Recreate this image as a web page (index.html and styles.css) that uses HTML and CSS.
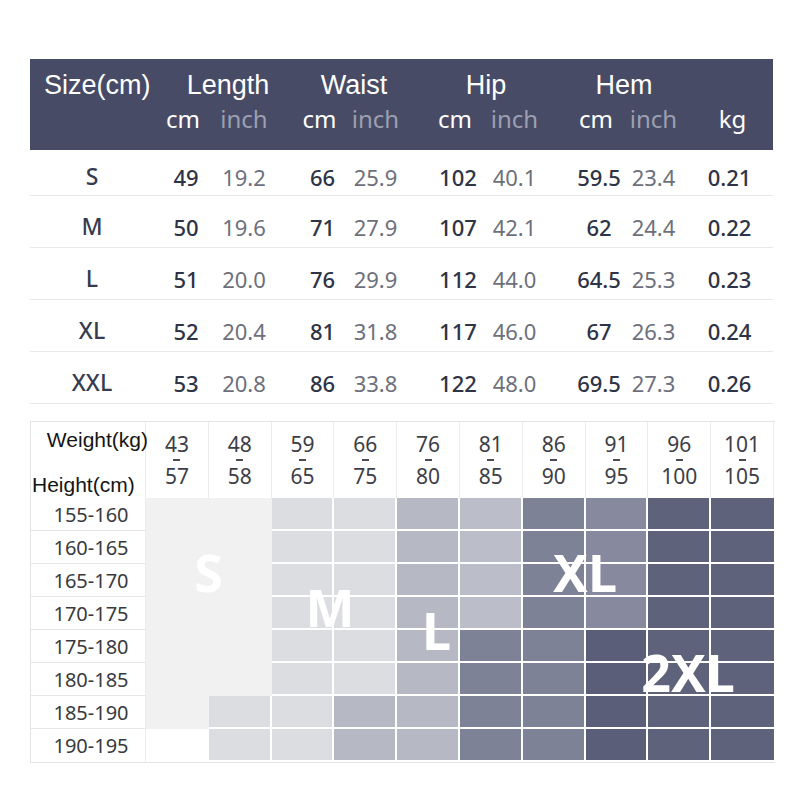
FILE: index.html
```html
<!DOCTYPE html>
<html lang="en">
<head>
<meta charset="utf-8">
<title>Size chart</title>
<link rel="stylesheet" href="styles.css">
</head>
<body>
<main class="page">
  <section class="size-table">
    <div class="st-head">
      <div class="st-row st-h1">
        <div class="h-size">Size(cm)</div>
        <div class="h-group g-length">Length</div>
        <div class="h-group g-waist">Waist</div>
        <div class="h-group g-hip">Hip</div>
        <div class="h-group g-hem">Hem</div>
        <div></div>
      </div>
      <div class="st-row st-h2">
        <div></div>
        <div class="cm">cm</div><div class="inch">inch</div>
        <div class="cm">cm</div><div class="inch">inch</div>
        <div class="cm">cm</div><div class="inch">inch</div>
        <div class="cm">cm</div><div class="inch">inch</div>
        <div class="kg">kg</div>
      </div>
    </div>
    <div class="st-row st-data first">
      <div class="size">S</div>
      <div class="cm">49</div><div class="inch">19.2</div>
      <div class="cm">66</div><div class="inch">25.9</div>
      <div class="cm">102</div><div class="inch">40.1</div>
      <div class="cm">59.5</div><div class="inch">23.4</div>
      <div class="kg">0.21</div>
    </div>
    <div class="st-row st-data">
      <div class="size">M</div>
      <div class="cm">50</div><div class="inch">19.6</div>
      <div class="cm">71</div><div class="inch">27.9</div>
      <div class="cm">107</div><div class="inch">42.1</div>
      <div class="cm">62</div><div class="inch">24.4</div>
      <div class="kg">0.22</div>
    </div>
    <div class="st-row st-data">
      <div class="size">L</div>
      <div class="cm">51</div><div class="inch">20.0</div>
      <div class="cm">76</div><div class="inch">29.9</div>
      <div class="cm">112</div><div class="inch">44.0</div>
      <div class="cm">64.5</div><div class="inch">25.3</div>
      <div class="kg">0.23</div>
    </div>
    <div class="st-row st-data">
      <div class="size">XL</div>
      <div class="cm">52</div><div class="inch">20.4</div>
      <div class="cm">81</div><div class="inch">31.8</div>
      <div class="cm">117</div><div class="inch">46.0</div>
      <div class="cm">67</div><div class="inch">26.3</div>
      <div class="kg">0.24</div>
    </div>
    <div class="st-row st-data">
      <div class="size">XXL</div>
      <div class="cm">53</div><div class="inch">20.8</div>
      <div class="cm">86</div><div class="inch">33.8</div>
      <div class="cm">122</div><div class="inch">48.0</div>
      <div class="cm">69.5</div><div class="inch">27.3</div>
      <div class="kg">0.26</div>
    </div>
  </section>

  <section class="fit-chart">
    <div class="corner"><span class="w-label">Weight(kg)</span><span class="h-label">Height(cm)</span></div>
    <div class="wt"><span>43</span><span class="dash"></span><span>57</span></div>
    <div class="wt"><span>48</span><span class="dash"></span><span>58</span></div>
    <div class="wt"><span>59</span><span class="dash"></span><span>65</span></div>
    <div class="wt"><span>66</span><span class="dash"></span><span>75</span></div>
    <div class="wt"><span>76</span><span class="dash"></span><span>80</span></div>
    <div class="wt"><span>81</span><span class="dash"></span><span>85</span></div>
    <div class="wt"><span>86</span><span class="dash"></span><span>90</span></div>
    <div class="wt"><span>91</span><span class="dash"></span><span>95</span></div>
    <div class="wt"><span>96</span><span class="dash"></span><span>100</span></div>
    <div class="wt"><span>101</span><span class="dash"></span><span>105</span></div>

    <div class="rl">155-160</div>
    <div class="c s"></div><div class="c s"></div><div class="c m"></div><div class="c m"></div><div class="c l"></div><div class="c l2"></div><div class="c xl"></div><div class="c xl2"></div><div class="c z"></div><div class="c z"></div>
    <div class="rl">160-165</div>
    <div class="c s"></div><div class="c s"></div><div class="c m"></div><div class="c m"></div><div class="c l"></div><div class="c l2"></div><div class="c xl"></div><div class="c xl2"></div><div class="c z"></div><div class="c z"></div>
    <div class="rl">165-170</div>
    <div class="c s"></div><div class="c s"></div><div class="c m"></div><div class="c m"></div><div class="c l"></div><div class="c l2"></div><div class="c xl"></div><div class="c xl2"></div><div class="c z"></div><div class="c z"></div>
    <div class="rl">170-175</div>
    <div class="c s"></div><div class="c s"></div><div class="c m"></div><div class="c m"></div><div class="c l"></div><div class="c l2"></div><div class="c xl"></div><div class="c xl2"></div><div class="c z"></div><div class="c z"></div>
    <div class="rl">175-180</div>
    <div class="c s"></div><div class="c s"></div><div class="c m"></div><div class="c m"></div><div class="c l"></div><div class="c xl"></div><div class="c xl"></div><div class="c z2"></div><div class="c z"></div><div class="c z"></div>
    <div class="rl">180-185</div>
    <div class="c s"></div><div class="c s"></div><div class="c m"></div><div class="c m"></div><div class="c l"></div><div class="c xl"></div><div class="c xl"></div><div class="c z2"></div><div class="c z"></div><div class="c z"></div>
    <div class="rl">185-190</div>
    <div class="c s"></div><div class="c m"></div><div class="c m"></div><div class="c l"></div><div class="c l"></div><div class="c xl"></div><div class="c xl"></div><div class="c z2"></div><div class="c z"></div><div class="c z"></div>
    <div class="rl last">190-195</div>
    <div class="c e"></div><div class="c m"></div><div class="c m"></div><div class="c l"></div><div class="c l"></div><div class="c xl"></div><div class="c xl"></div><div class="c z2"></div><div class="c z"></div><div class="c z"></div>

    <span class="tag tag-s">S</span>
    <span class="tag tag-m">M</span>
    <span class="tag tag-l">L</span>
    <span class="tag tag-xl">XL</span>
    <span class="tag tag-2xl">2XL</span>
  </section>
</main>
</body>
</html>
```

FILE: styles.css
```css
html, body {
  margin: 0;
  background: #ffffff;
}

.page {
  padding: 59px 0 0 30px;
  width: 744px;
}

/* ---------- top size table ---------- */
.size-table {
  width: 743px;
}

.st-row {
  display: grid;
  grid-template-columns: 110px 77px 66px 64px 69px 69px 71px 71px 65px 81px;
}

.st-head {
  background: #474b65;
  height: 91px;
  box-sizing: border-box;
  padding-top: 10px;
}

.st-h1 {
  height: 32px;
  line-height: 32px;
  font-family: "Liberation Sans", Arial, sans-serif;
  font-size: 27px;
  color: #ffffff;
}

.h-size {
  padding-left: 14px;
  white-space: nowrap;
}

.h-group {
  grid-column: span 2;
  text-align: center;
}

.g-length { padding-left: 33px; }
.g-waist { padding-left: 9px; }

.st-h2 {
  margin-top: 3px;
  height: 30px;
  line-height: 30px;
  font-family: "Noto Sans", sans-serif;
  font-size: 24px;
}

.cm {
  padding-left: 15px;
  text-align: center;
}

.inch {
  padding-right: 12px;
  text-align: center;
}

.kg {
  padding-right: 6px;
  text-align: center;
}

.st-h2 .cm {
  color: #ffffff;
  padding-left: 9px;
}

.st-h2 .kg {
  color: #ffffff;
  padding-right: 0;
}

.st-h2 .inch {
  color: #9d9fb1;
}

.st-data {
  height: 52px;
  box-sizing: border-box;
  padding-top: 10px;
  border-bottom: 1px solid #e8e8eb;
  align-items: center;
  font-family: "Noto Sans", sans-serif;
  font-size: 22px;
  line-height: 1;
}

.st-data.first {
  height: 46px;
  padding-top: 8px;
}

.size {
  padding-left: 14px;
  text-align: center;
  font-size: 23px;
  font-weight: 500;
  color: #363b50;
}

.st-data .cm,
.st-data .kg {
  font-weight: 500;
  color: #2e3345;
}

.st-data .inch {
  color: #6d707c;
}

/* ---------- fit chart ---------- */
.fit-chart {
  position: relative;
  margin-top: 17px;
  width: 744px;
  display: grid;
  grid-template-columns: 115px repeat(10, 62.8px);
  grid-template-rows: 76px repeat(8, 33px);
  border-top: 1px solid #e4e4e6;
  border-left: 1px solid #e4e4e6;
  border-bottom: 1px solid #e4e4e6;
}

.corner {
  display: flex;
  flex-direction: column;
  justify-content: space-between;
  box-sizing: border-box;
  padding: 6px 0 1px 0;
  border-right: 1px solid #ececee;
  font-family: "Liberation Sans", Arial, sans-serif;
  font-size: 21px;
  line-height: 24px;
  color: #151515;
  white-space: nowrap;
}

.w-label {
  align-self: flex-end;
  margin-right: -3px;
}

.h-label {
  align-self: flex-start;
  margin-left: 1px;
}

.wt {
  display: flex;
  flex-direction: column;
  align-items: center;
  justify-content: center;
  box-sizing: border-box;
  border-right: 1px solid #ececee;
  font-family: "Noto Sans", sans-serif;
  font-size: 21px;
  line-height: 16px;
  color: #3d3e47;
}

.wt .dash {
  display: block;
  width: 7px;
  height: 2px;
  margin: 7px 0;
  background: #4a4b54;
}

.rl {
  display: flex;
  align-items: center;
  justify-content: center;
  box-sizing: border-box;
  padding-left: 6px;
  border-bottom: 1px solid #e6e6e8;
  border-right: 1px solid #ececee;
  font-family: "Noto Sans", sans-serif;
  font-size: 20px;
  color: #3a3a3e;
}

.rl.last {
  border-bottom: 0;
}

.c {
  box-sizing: border-box;
  border-right: 2px solid #ffffff;
  border-bottom: 2px solid #ffffff;
}

.fit-chart > .c:nth-child(11n) {
  border-right: 0;
}

.c.s { background: #f1f1f2; border-color: #f1f1f2; }
.c.e { background: #ffffff; }
.c.m { background: #dcdde1; }
.c.l { background: #b6b8c4; }
.c.l2 { background: #bbbdc8; }
.c.xl { background: #7e8297; }
.c.xl2 { background: #878a9e; }
.c.z { background: #5e627b; }
.c.z2 { background: #5a5e78; }

.tag {
  position: absolute;
  transform: translate(-50%, -50%);
  font-family: "Noto Sans", sans-serif;
  font-weight: 700;
  font-size: 52px;
  line-height: 1;
  color: #ffffff;
  white-space: nowrap;
}

.tag-s { left: 177.5px; top: 150px; }
.tag-m { left: 299px; top: 184.5px; }
.tag-l { left: 405.5px; top: 208px; }
.tag-xl { left: 554px; top: 150px; }
.tag-2xl { left: 657px; top: 250px; }
```
